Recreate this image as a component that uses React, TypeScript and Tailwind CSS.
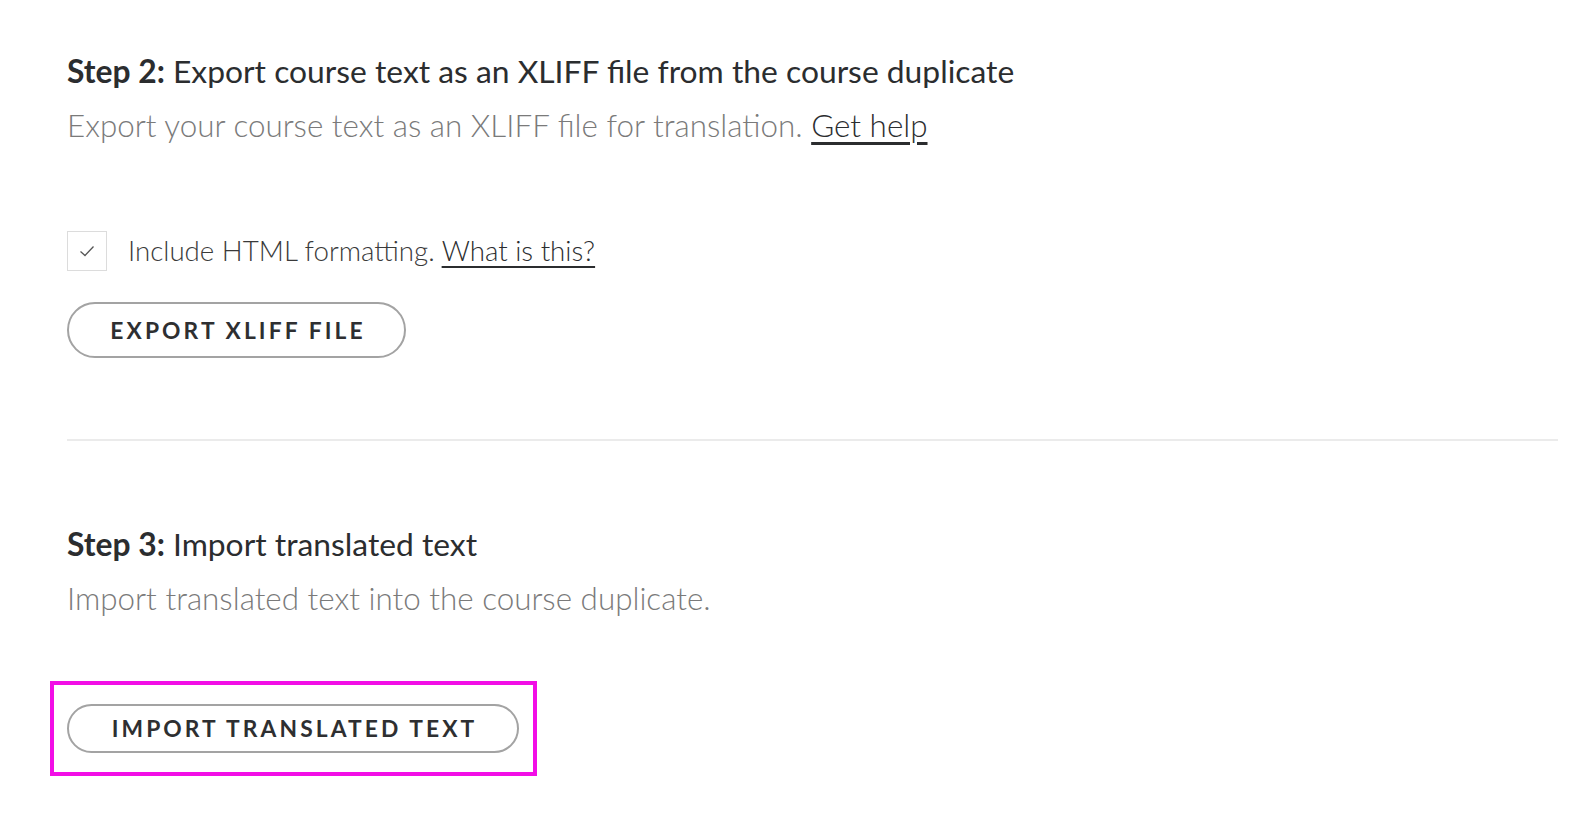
export default function App() {
  return (
    <div
      className="min-h-[834px] w-[1578px] bg-white pl-[67px] pr-[20px] pt-[49px] text-[#2d2f31]"
      style={{ fontFamily: "Lato, 'Open Sans', sans-serif" }}
    >
      {/* Step 2 */}
      <section>
        <h2 className="text-[31.8px] leading-[44px] text-[#2b2d2f]">
          <span className="font-bold">Step 2:</span> Export course text as an XLIFF file from the course duplicate
        </h2>
        <p className="mt-[10px] text-[31.4px] font-light leading-[44px] text-[#7a7a7a]">
          Export your course text as an XLIFF file for translation.{" "}
          <a href="#" className="text-[#2b2d2f] underline underline-offset-[5px]">
            Get help
          </a>
        </p>

        <label className="mt-[84px] flex items-center gap-[21px]">
          <span className="flex h-[40px] w-[40px] items-center justify-center border border-[#dcdcdc] bg-white">
            <svg width="16" height="12" viewBox="0 0 16 12" fill="none">
              <path d="M1.5 6.5 L6 10.5 L14.5 1.5" stroke="#555" strokeWidth="1.3" />
            </svg>
          </span>
          <span className="text-[27.7px] font-light leading-[40px] text-[#3a3a3a]">
            Include HTML formatting.{" "}
            <a href="#" className="text-[#2b2d2f] underline underline-offset-[5px]">
              What is this?
            </a>
          </span>
        </label>

        <button className="mt-[31px] flex h-[56px] w-[339px] items-center justify-center rounded-full border-2 border-[#a3a3a3] bg-white pl-[3px] text-[22.8px] font-bold tracking-[0.135em] text-[#2e2f31]">
          EXPORT XLIFF FILE
        </button>
      </section>

      <div className="mt-[81px] h-[2px] w-[1491px] bg-[#ebebeb]" />

      {/* Step 3 */}
      <section className="mt-[81px]">
        <h2 className="text-[31.8px] leading-[44px] text-[#2b2d2f]">
          <span className="font-bold">Step 3:</span> Import translated text
        </h2>
        <p className="mt-[10px] text-[31.4px] font-light leading-[44px] text-[#7a7a7a]">
          Import translated text into the course duplicate.
        </p>

        <div className="ml-[-17px] mt-[61px] w-[487px] border-[4px] border-[#f20ee6] px-[13px] py-[19px]">
          <button className="flex h-[49px] w-[452px] items-center justify-center rounded-full border-2 border-[#a3a3a3] bg-white pl-[3px] text-[22.8px] font-bold tracking-[0.135em] text-[#2e2f31]">
            IMPORT TRANSLATED TEXT
          </button>
        </div>
      </section>
    </div>
  );
}
